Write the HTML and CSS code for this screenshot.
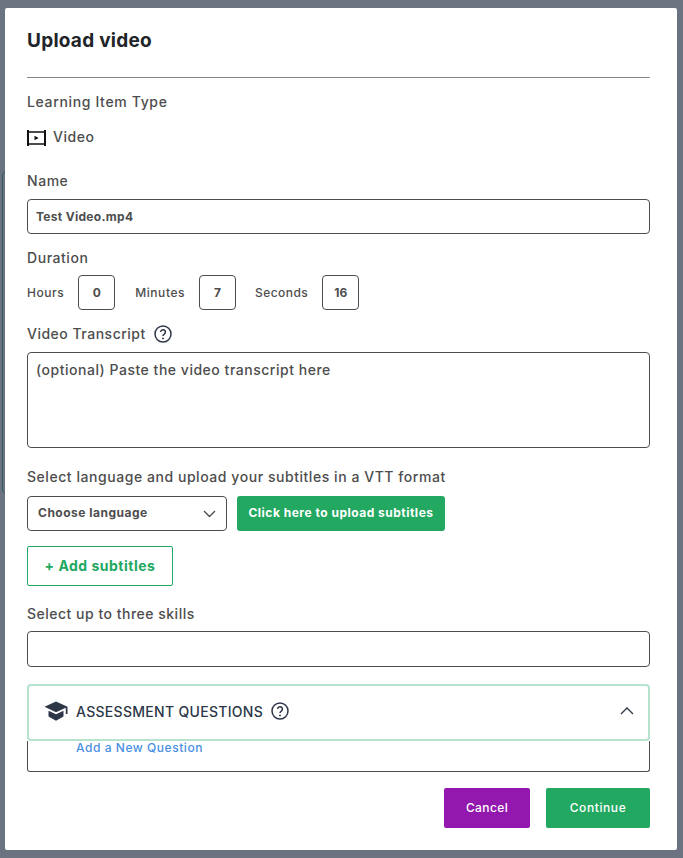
FILE: index.html
```html
<!DOCTYPE html>
<html lang="en">
<head>
<meta charset="utf-8">
<title>Upload video</title>
<link rel="stylesheet" href="styles.css">
</head>
<body>
<div class="behind"></div>
<main class="modal">
  <h1 class="title">Upload video</h1>
  <hr class="rule">
  <div class="label type-label">Learning Item Type</div>
  <div class="type-row">
    <svg class="video-icon" width="19" height="16" viewBox="0 0 19 16" aria-hidden="true">
      <path d="M1 0v16M18 0v16" stroke="#111" stroke-width="2" fill="none"/>
      <path d="M0 2h19M0 14h19" stroke="#111" stroke-width="1.500" fill="none"/>
      <path d="M7.500 5.800l4.200 2.200-4.200 2.200z" fill="#111"/>
    </svg>
    <span class="type-name">Video</span>
  </div>
  <div class="label name-label">Name</div>
  <div class="field name-field">Test Video.mp4</div>
  <div class="label duration-label">Duration</div>
  <div class="duration">
    <span class="unit">Hours</span><span class="num">0</span>
    <span class="unit">Minutes</span><span class="num num-tight">7</span>
    <span class="unit unit-seconds">Seconds</span><span class="num">16</span>
  </div>
  <div class="label transcript-label">Video Transcript
    <svg class="help" width="18" height="18" viewBox="0 0 18 18" aria-hidden="true">
      <circle cx="9" cy="9" r="8" fill="none" stroke="#2d3748" stroke-width="1.500"/>
      <path d="M6.600 7.100a2.400 2.400 0 1 1 3.700 2c-.9.6-1.300 1-1.300 2" fill="none" stroke="#2d3748" stroke-width="1.500"/>
      <circle cx="9" cy="13.400" r=".95" fill="#2d3748"/>
    </svg>
  </div>
  <div class="textarea">(optional) Paste the video transcript here</div>
  <div class="label subtitles-label">Select language and upload your subtitles in a VTT format</div>
  <div class="subtitle-row">
    <div class="select">
      <span class="select-text">Choose language</span>
      <svg width="13" height="8" viewBox="0 0 13 8" aria-hidden="true"><path d="M1 1l5.500 5.500L12 1" fill="none" stroke="#4a4a4a" stroke-width="1.300"/></svg>
    </div>
    <button class="btn-upload" type="button">Click here to upload subtitles</button>
  </div>
  <button class="btn-add" type="button">+ Add subtitles</button>
  <div class="label skills-label">Select up to three skills</div>
  <div class="field skills-field"></div>
  <section class="accordion">
    <svg class="cap" width="24" height="20" viewBox="0 0 24 20" aria-hidden="true">
      <path d="M12 0.500L0.500 5.800 12 11.200 21.800 6.700V13H23.500V5.800z" fill="#2d3748"/>
      <path d="M4.500 9.800V15.500L12 19.800l7.500-4.300V9.800L12 13.300z" fill="#2d3748"/>
    </svg>
    <span class="acc-title">ASSESSMENT QUESTIONS</span>
    <svg class="help" width="18" height="18" viewBox="0 0 18 18" aria-hidden="true">
      <circle cx="9" cy="9" r="8" fill="none" stroke="#2d3748" stroke-width="1.500"/>
      <path d="M6.600 7.100a2.400 2.400 0 1 1 3.700 2c-.9.6-1.300 1-1.300 2" fill="none" stroke="#2d3748" stroke-width="1.500"/>
      <circle cx="9" cy="13.400" r=".95" fill="#2d3748"/>
    </svg>
    <svg class="chev" width="14" height="8" viewBox="0 0 14 8" aria-hidden="true"><path d="M1 7l6-6 6 6" fill="none" stroke="#2d3748" stroke-width="1.300"/></svg>
  </section>
  <div class="questions"><a class="add-q" href="#">Add a New Question</a></div>
  <div class="actions">
    <button class="btn-cancel" type="button">Cancel</button>
    <button class="btn-continue" type="button">Continue</button>
  </div>
</main>
</body>
</html>
```
FILE: styles.css
```css
* { box-sizing: border-box; }
html, body { margin: 0; height: 858px; overflow: hidden; }
body {
  background: #6b7280;
  font-family: Inter, "Open Sans", sans-serif;
  color: #4d4d4d;
  padding: 8px 6px 8px 5px;
  position: relative;
}
.behind {
  position: absolute;
  left: 2px; top: 170px;
  width: 40px; height: 325px;
  border: 1px solid #2f5f5f;
  border-radius: 6px;
}
.modal {
  position: relative;
  background: #fff;
  height: 842px;
  border-radius: 2px;
  padding: 0 27px 0 22px;
  display: flex;
  flex-direction: column;
  align-items: flex-start;
}
.title {
  margin: 22px 0 0;
  font-size: 19px;
  line-height: 22px;
  font-weight: 700;
  color: #212529;
  letter-spacing: 0.25px;
}
.rule { width: 100%; margin: 25px 0 0; border: 0; border-top: 1px solid #868686; }
.label {
  font-size: 14px;
  line-height: 18px;
  font-weight: 500;
  color: #4d4d4d;
  letter-spacing: 0.55px;
}
.type-label { margin-top: 15px; letter-spacing: 0.65px; }
.type-row { display: flex; align-items: center; gap: 7px; margin-top: 16px; height: 18px; }
.type-name { font-size: 14px; font-weight: 500; letter-spacing: 0.55px; }
.video-icon { margin-top: 3px; }
.name-label { margin-top: 27px; }
.field {
  width: 100%;
  border: 1px solid #4d4d4d;
  border-radius: 4px;
  background: #fff;
}
.name-field {
  margin-top: 9px;
  height: 35px;
  padding: 0 8px;
  display: flex;
  align-items: center;
  font-size: 12px;
  font-weight: 700;
  letter-spacing: 0.3px;
}
.duration-label { margin-top: 15px; }
.duration { display: flex; align-items: center; margin-top: 8px; height: 35px; }
.unit { font-size: 12px; font-weight: 500; letter-spacing: 0.55px; }
.unit-seconds { letter-spacing: 0.45px; }
.num {
  width: 37px; height: 35px;
  margin: 0 20px 0 14px;
  border: 1px solid #4d4d4d;
  border-radius: 4px;
  display: flex; align-items: center; justify-content: center;
  font-size: 12px; font-weight: 700;
}
.num-tight { margin-right: 19px; }
.transcript-label { margin-top: 15px; display: flex; align-items: center; gap: 8px; letter-spacing: 0.5px; }
.textarea {
  width: 100%;
  height: 96px;
  margin-top: 9px;
  border: 1px solid #4d4d4d;
  border-radius: 4px;
  padding: 8px;
  font-size: 14px;
  line-height: 18px;
  font-weight: 500;
  letter-spacing: 0.52px;
}
.subtitles-label { margin-top: 20px; }
.subtitle-row { display: flex; gap: 10px; margin-top: 10px; }
.select {
  width: 200px; height: 35px;
  border: 1px solid #4d4d4d;
  border-radius: 4px;
  padding: 0 10px;
  display: flex; align-items: center; justify-content: space-between;
  font-size: 12px; font-weight: 700; letter-spacing: 0.5px;
}
.select-text { margin-bottom: 2px; }
button { font-family: inherit; cursor: pointer; }
.btn-upload {
  width: 208px; height: 35px;
  background: #22a861;
  color: #fff;
  border: 0;
  border-radius: 3px;
  font-size: 12px; font-weight: 700; letter-spacing: 0.5px;
  padding: 0 0 2px;
}
.btn-add {
  width: 146px; height: 40px;
  margin-top: 15px;
  background: #fff;
  color: #22a861;
  border: 1px solid #22a861;
  border-radius: 2px;
  font-size: 14px; font-weight: 700; letter-spacing: 0.5px;
  padding: 0 0 2px;
}
.skills-label { margin-top: 19px; letter-spacing: 0.5px; }
.skills-field { height: 36px; margin-top: 8px; }
.accordion {
  width: 100%;
  height: 57px;
  margin-top: 17px;
  border: 2px solid #b5e3cd;
  border-radius: 4px;
  padding: 0 14px 3px 15px;
  display: flex;
  align-items: center;
  color: #2d3748;
}
.cap { flex: none; margin-right: 8px; }
.acc-title { font-size: 14px; font-weight: 500; letter-spacing: 0.3px; margin-right: 8px; }
.chev { margin-left: auto; }
.questions {
  width: 100%;
  height: 31px;
  border: 1px solid #4d4d4d;
  border-top: 0;
  border-radius: 0 0 3px 3px;
  padding-left: 48px;
}
.add-q { display: block; font-size: 12px; line-height: 14px; font-weight: 500; letter-spacing: 0.55px; color: #4a90e2; text-decoration: none; }
.actions { display: flex; gap: 16px; align-self: flex-end; margin-top: 16px; }
.btn-cancel, .btn-continue {
  height: 40px; border: 0; border-radius: 2px; color: #fff;
  padding: 0 0 2px;
  font-size: 12px; font-weight: 500; letter-spacing: 0.5px;
}
.btn-cancel { width: 86px; background: #9318ae; letter-spacing: 0.4px; }
.btn-continue { width: 104px; background: #22a861; letter-spacing: 0.6px; }
```
